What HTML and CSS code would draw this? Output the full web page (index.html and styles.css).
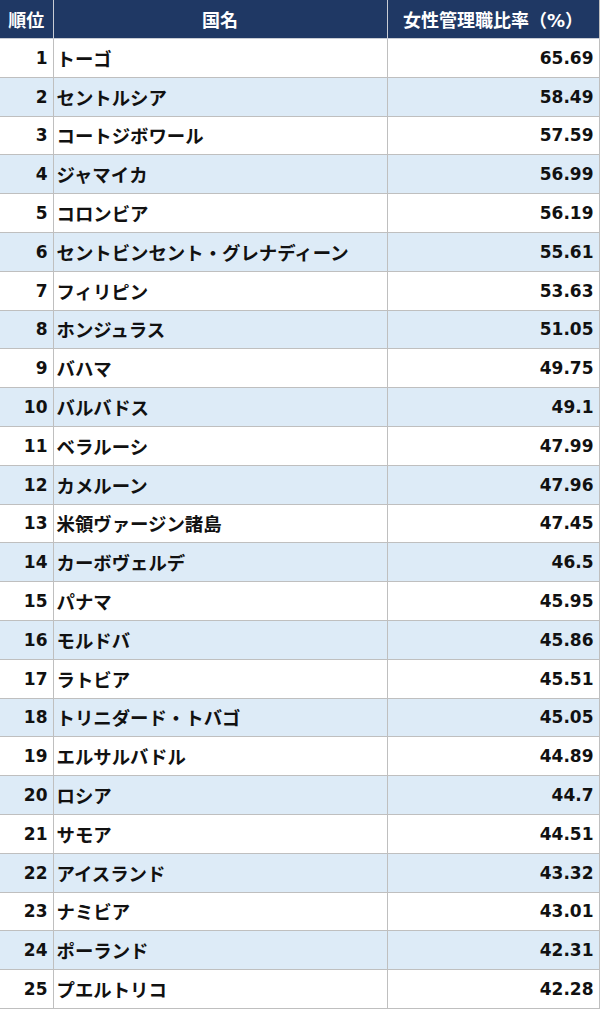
FILE: index.html
```html
<!DOCTYPE html>
<html lang="ja">
<head>
<meta charset="utf-8">
<link rel="stylesheet" href="styles.css">
</head>
<body>
<table class="rank">
<colgroup><col class="c-rank"><col class="c-name"><col class="c-val"></colgroup>
<thead>
<tr><th>順位</th><th>国名</th><th>女性管理職比率（%）</th></tr>
</thead>
<tbody>
<tr><td class="num">1</td><td class="name">トーゴ</td><td class="num">65.69</td></tr>
<tr><td class="num">2</td><td class="name">セントルシア</td><td class="num">58.49</td></tr>
<tr><td class="num">3</td><td class="name">コートジボワール</td><td class="num">57.59</td></tr>
<tr><td class="num">4</td><td class="name">ジャマイカ</td><td class="num">56.99</td></tr>
<tr><td class="num">5</td><td class="name">コロンビア</td><td class="num">56.19</td></tr>
<tr><td class="num">6</td><td class="name">セントビンセント・グレナディーン</td><td class="num">55.61</td></tr>
<tr><td class="num">7</td><td class="name">フィリピン</td><td class="num">53.63</td></tr>
<tr><td class="num">8</td><td class="name">ホンジュラス</td><td class="num">51.05</td></tr>
<tr><td class="num">9</td><td class="name">バハマ</td><td class="num">49.75</td></tr>
<tr><td class="num">10</td><td class="name">バルバドス</td><td class="num">49.1</td></tr>
<tr><td class="num">11</td><td class="name">ベラルーシ</td><td class="num">47.99</td></tr>
<tr><td class="num">12</td><td class="name">カメルーン</td><td class="num">47.96</td></tr>
<tr><td class="num">13</td><td class="name">米領ヴァージン諸島</td><td class="num">47.45</td></tr>
<tr><td class="num">14</td><td class="name">カーボヴェルデ</td><td class="num">46.5</td></tr>
<tr><td class="num">15</td><td class="name">パナマ</td><td class="num">45.95</td></tr>
<tr><td class="num">16</td><td class="name">モルドバ</td><td class="num">45.86</td></tr>
<tr><td class="num">17</td><td class="name">ラトビア</td><td class="num">45.51</td></tr>
<tr><td class="num">18</td><td class="name">トリニダード・トバゴ</td><td class="num">45.05</td></tr>
<tr><td class="num">19</td><td class="name">エルサルバドル</td><td class="num">44.89</td></tr>
<tr><td class="num">20</td><td class="name">ロシア</td><td class="num">44.7</td></tr>
<tr><td class="num">21</td><td class="name">サモア</td><td class="num">44.51</td></tr>
<tr><td class="num">22</td><td class="name">アイスランド</td><td class="num">43.32</td></tr>
<tr><td class="num">23</td><td class="name">ナミビア</td><td class="num">43.01</td></tr>
<tr><td class="num">24</td><td class="name">ポーランド</td><td class="num">42.31</td></tr>
<tr><td class="num">25</td><td class="name">プエルトリコ</td><td class="num">42.28</td></tr>
</tbody>
</table>
</body>
</html>
```
FILE: styles.css
```css
html, body {
  margin: 0;
  padding: 0;
  background: #ffffff;
}

.rank {
  border-collapse: collapse;
  table-layout: fixed;
  width: 599px;
  font-family: "DejaVu Sans", "Noto Sans CJK JP", sans-serif;
  font-weight: bold;
  font-size: 17px;
  color: #111111;
}

.c-rank { width: 53px; }
.c-name { width: 334px; }
.c-val { width: 212px; }

.rank th {
  background: #1f3864;
  color: #ffffff;
  height: 38px;
  padding: 0;
  text-align: center;
  font-weight: bold;
  font-size: 18px;
  border-right: 1px solid #c8ccd4;
  border-bottom: 1px solid #c8ccd4;
}

.rank th:last-child { border-right: 1px solid #bfbfbf; }

.rank td {
  height: 37.8px;
  padding: 0 5px 0 4px;
  border-right: 1px solid #bfbfbf;
  border-bottom: 1px solid #bfbfbf;
  white-space: nowrap;
  overflow: hidden;
  vertical-align: middle;
}

.rank td.name {
  font-size: 18.4px;
  padding-left: 3px;
}

.rank td.num {
  text-align: right;
  padding: 0 5px 0 2px;
}

.rank tbody tr:nth-child(even) td {
  background: #ddebf7;
}
```
